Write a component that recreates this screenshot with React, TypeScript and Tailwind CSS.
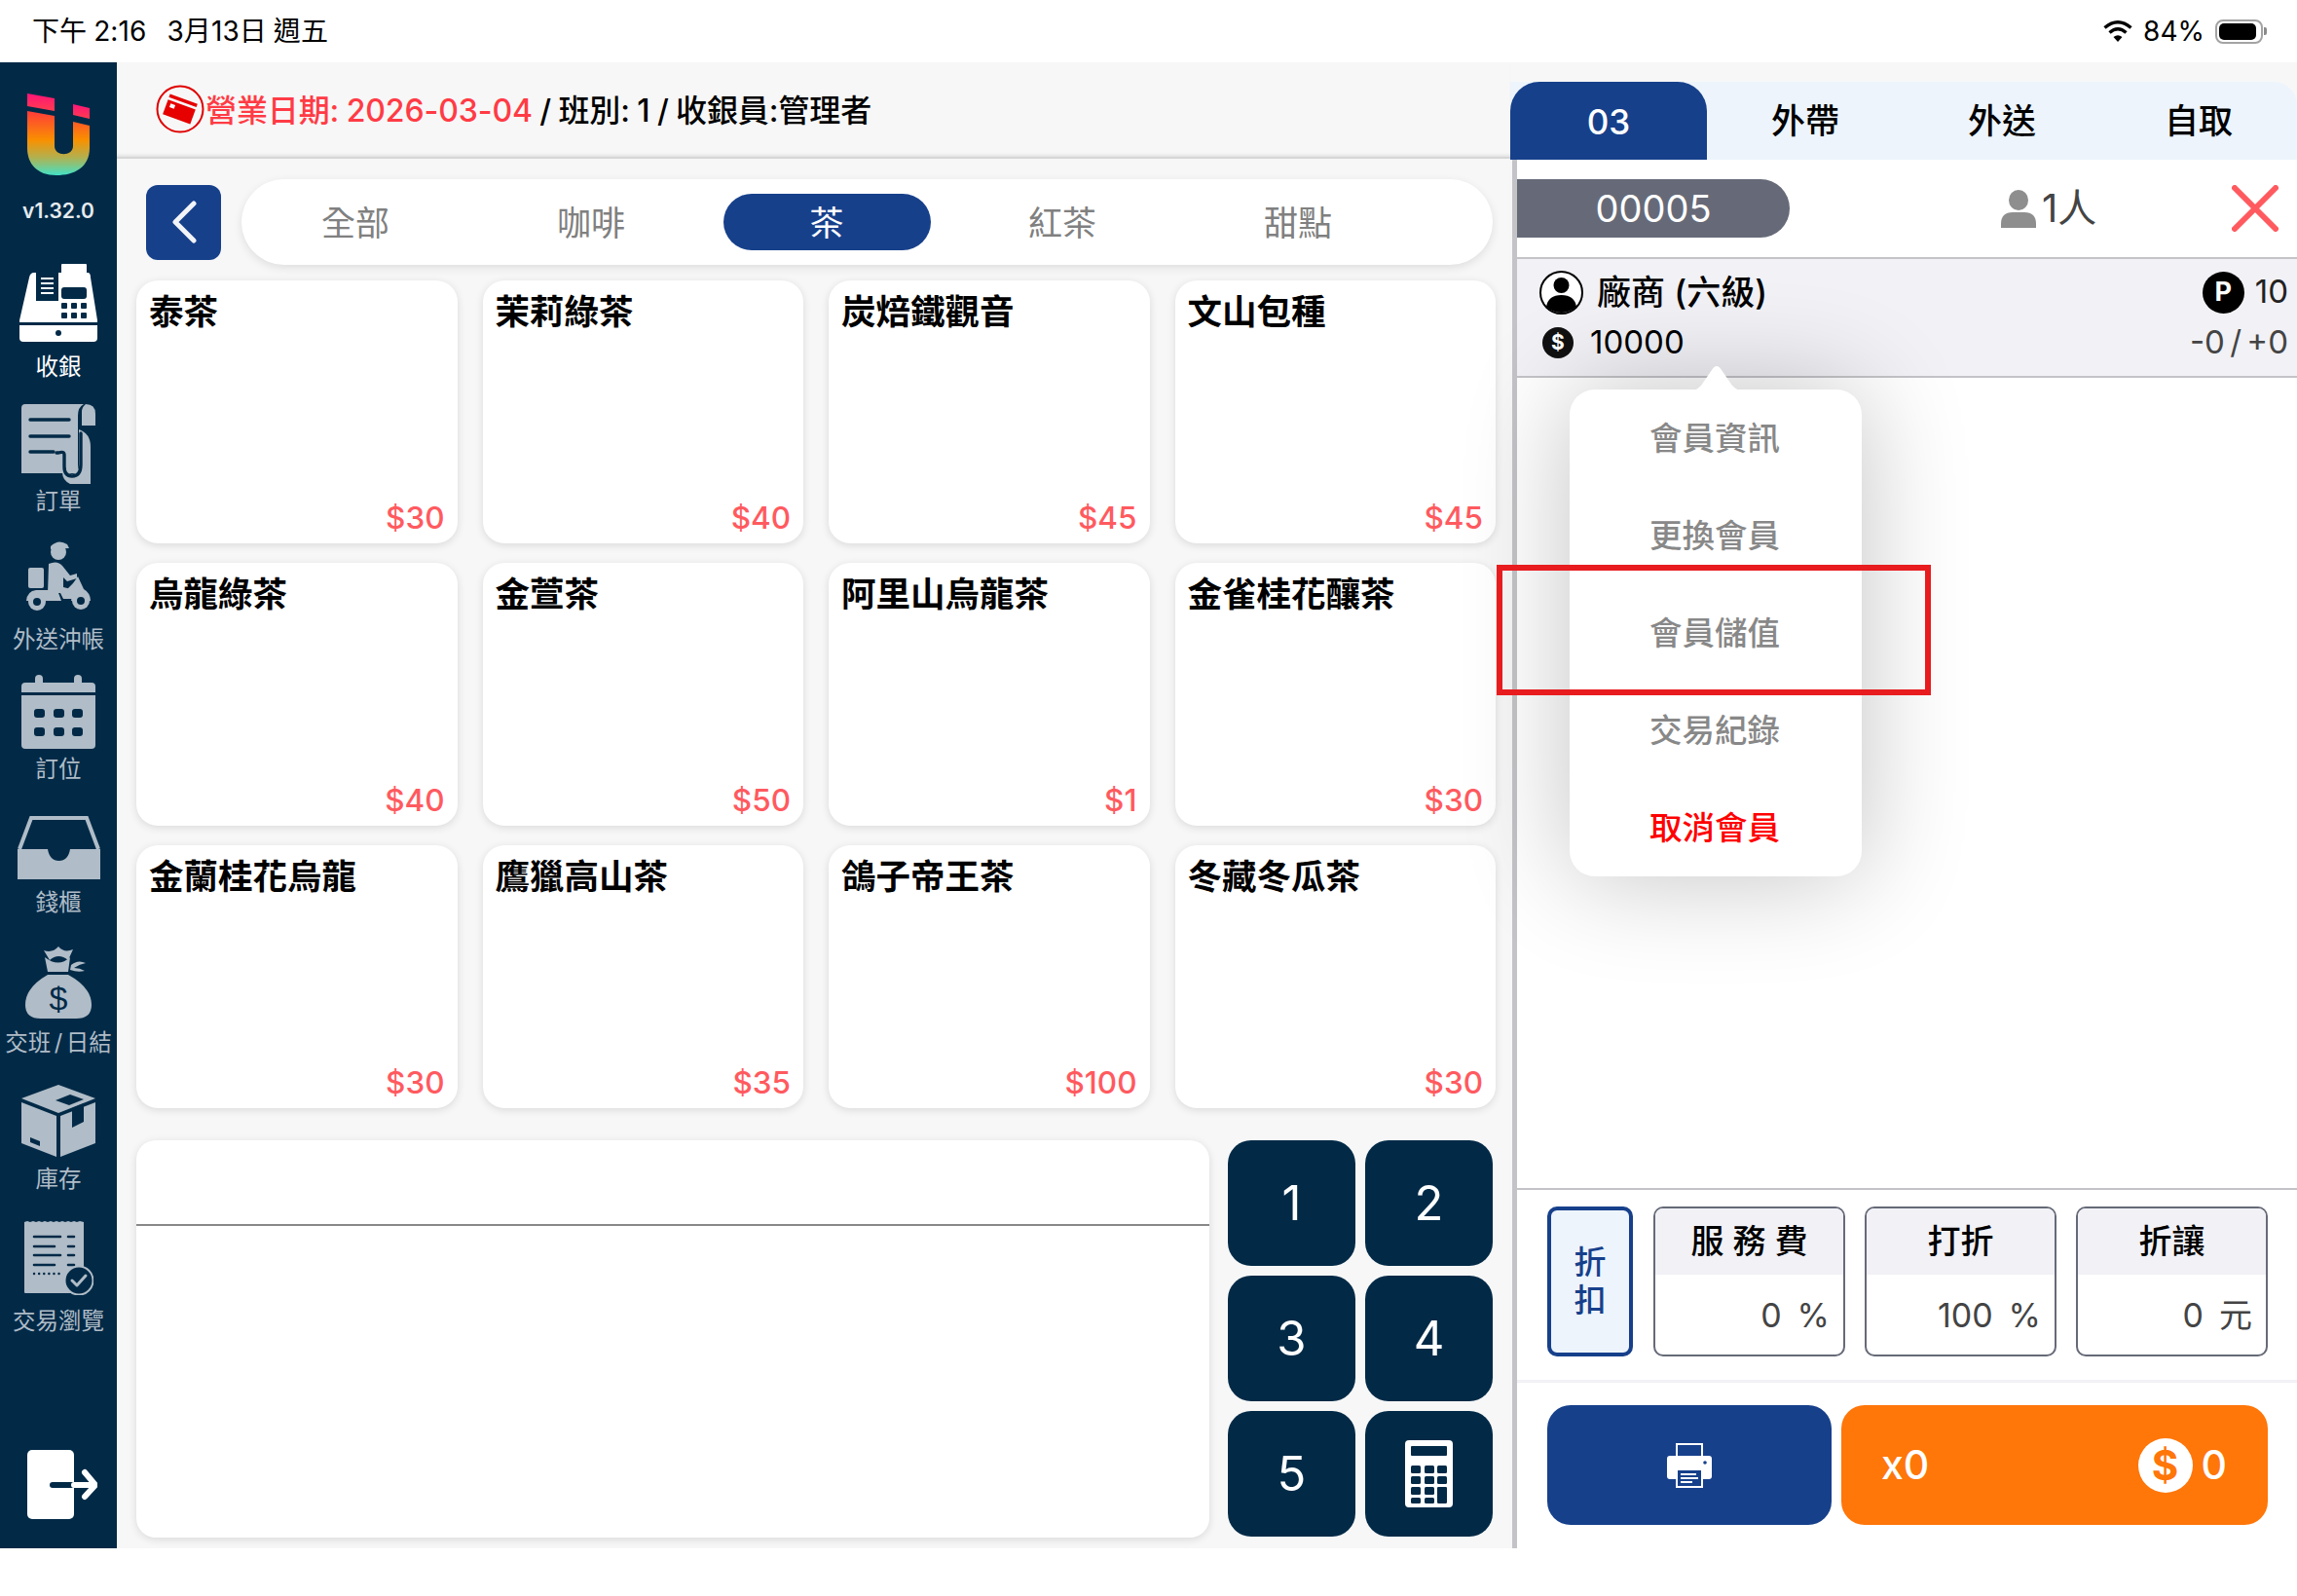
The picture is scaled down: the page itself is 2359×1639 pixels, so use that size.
import type { ReactNode } from "react";

const NAVY = "#022a47";
const LIGHT = "#b0bcc7";

function Logo() {
  return (
    <svg width="64" height="84" viewBox="0 0 64 84">
      <defs>
        <linearGradient id="u" x1="0" y1="0" x2="0" y2="1">
          <stop offset="0" stopColor="#ff3a3a" />
          <stop offset="0.45" stopColor="#f99000" />
          <stop offset="0.72" stopColor="#b3b04e" />
          <stop offset="1" stopColor="#43e2c6" />
        </linearGradient>
        <linearGradient id="p" x1="0" y1="0" x2="0" y2="1">
          <stop offset="0" stopColor="#ff1478" />
          <stop offset="1" stopColor="#ff3d4e" />
        </linearGradient>
      </defs>
      <path d="M0 0L28 5V18L0 13Z" fill="url(#p)" />
      <path d="M47 11L64 15V26L47 22Z" fill="url(#p)" />
      <path d="M0 18L28 23V54C28 65 47 65 47 54V29L64 33V56C64 76 48 84 30 84C10 84 0 72 0 56Z" fill="url(#u)" />
    </svg>
  );
}

function RegisterIcon() {
  return (
    <svg width="80" height="80" viewBox="0 0 80 80" fill="#fff">
      <rect x="43" y="0" width="26" height="16" rx="1" />
      <path d="M15 9H70Q73 9 73 14L80 58V60H0V58L10 14Q11 9 15 9Z" />
      <rect x="17" y="8" width="23" height="30" fill={NAVY} />
      <path d="M22 15H35M22 20H35M22 25H35M22 30H35" stroke="#fff" strokeWidth="2.200" />
      <rect x="43" y="24" width="26" height="12" rx="3" fill={NAVY} />
      <rect x="43" y="40" width="6" height="6" rx="1" fill={NAVY} />
      <rect x="53" y="40" width="6" height="6" rx="1" fill={NAVY} />
      <rect x="63" y="40" width="6" height="6" rx="1" fill={NAVY} />
      <rect x="43" y="50" width="6" height="6" rx="1" fill={NAVY} />
      <rect x="53" y="50" width="6" height="6" rx="1" fill={NAVY} />
      <rect x="63" y="50" width="6" height="6" rx="1" fill={NAVY} />
      <path d="M0 63H80V76Q80 80 76 80H4Q0 80 0 76Z" />
      <circle cx="40" cy="71" r="3" fill={NAVY} />
    </svg>
  );
}

function OrderIcon() {
  return (
    <svg width="76" height="82" viewBox="0 0 76 82" fill={LIGHT}>
      <path d="M4 0H64Q58 3 58 12V71H0V4Q0 0 4 0Z" />
      <path d="M66 0Q76 0 76 10V22H62V8Q62 3 66 0Z" />
      <path d="M42 58H46V64Q46 72 52 72Q59 72 59 62V26Q71 30 71 44V82H50Q42 78 42 70Z" />
      <path d="M9 16H49M9 33H49M9 49H33" stroke={NAVY} strokeWidth="3.400" strokeLinecap="round" />
      <path d="M44 52Q44 48 38 50H36M44 52V64Q44 74 52 74Q61 74 61 62V30" fill="none" stroke={NAVY} strokeWidth="3.400" strokeLinecap="round" />
    </svg>
  );
}

function ScooterIcon() {
  return (
    <svg width="66" height="72" viewBox="0 0 66 72" fill={LIGHT}>
      <circle cx="33" cy="12" r="8" />
      <path d="M25 6Q33 -2 42 4L44 8L25 9Z" />
      <rect x="2" y="28" width="16" height="21" rx="2" />
      <path d="M23 24Q32 20 37 26L45 36L52 34V39L42 42L38 38V48L46 50L48 60H38L35 54H22Z" />
      <path d="M53 37L59 50Q66 54 66 62H46L47 56L42 50L48 44Z" />
      <path d="M0 62Q1 52 10 51H32L36 62Z" />
      <circle cx="11" cy="63" r="9" />
      <circle cx="11" cy="63" r="4" fill={NAVY} />
      <circle cx="56" cy="62" r="9" />
      <circle cx="56" cy="62" r="4" fill={NAVY} />
    </svg>
  );
}

function CalendarIcon() {
  return (
    <svg width="76" height="76" viewBox="0 0 76 76" fill={LIGHT}>
      <rect x="0" y="8" width="76" height="68" rx="4" />
      <rect x="14" y="0" width="8" height="14" rx="4" />
      <rect x="54" y="0" width="8" height="14" rx="4" />
      <rect x="0" y="18" width="76" height="3" fill={NAVY} />
      {[13, 33, 52].map((x) => (
        <g key={x} fill={NAVY}>
          <rect x={x} y="35" width="11" height="9" rx="3" />
          <rect x={x} y="54" width="11" height="9" rx="3" />
        </g>
      ))}
    </svg>
  );
}

function DrawerIcon() {
  return (
    <svg width="85" height="66" viewBox="0 0 85 66" fill={LIGHT}>
      <path d="M2 34L14 2H71L83 34" fill="none" stroke={LIGHT} strokeWidth="4" />
      <path d="M0 34H31Q33 46 42.500 46Q52 46 54 34H85V65H0Z" />
    </svg>
  );
}

function BagIcon() {
  return (
    <svg width="68" height="74" viewBox="0 0 68 74" fill={LIGHT}>
      <path d="M19 4Q28 7 34 0Q40 7 49 3L44 14Q34 6 25 14Z" />
      <path d="M20 11Q34 22 46 11L44 26H23Z" />
      <path d="M47 19Q54 13 62 17Q56 18 50 22Q56 22 61 25Q54 27 46 24Z" />
      <path d="M23 29H44Q68 42 68 60Q68 74 52 74H16Q0 74 0 60Q0 42 23 29Z" />
      <text x="34" y="65" textAnchor="middle" fontSize="34" fill={NAVY} fontFamily="'Liberation Sans',sans-serif">$</text>
    </svg>
  );
}

function BoxIcon() {
  return (
    <svg width="76" height="74" viewBox="0 0 76 74" fill={LIGHT}>
      <path d="M38 0L76 14L38 29L0 14Z" />
      <path d="M0 18L36 32V74L0 60Z" />
      <path d="M40 32L76 18V60L40 74Z" />
      <path d="M35 16L50 10L64 15L49 21Z" fill={NAVY} />
      <path d="M52 24L64 19V38L52 44Z" fill={NAVY} />
      <path d="M9 54L19 58V63L9 59Z" fill={NAVY} />
    </svg>
  );
}

function ReceiptIcon() {
  return (
    <svg width="71" height="76" viewBox="0 0 71 76" fill={LIGHT}>
      <path d="M0 1L3 0L6 1L9 0L12 1L15 0L18 1L21 0L24 1L27 0L30 1L33 0L36 1L39 0L42 1L45 0L48 1L51 0L54 1L57 0L61 1V73Q61 74 60 74H1Q0 74 0 73Z" />
      <path d="M10 16H37M45 16H51M10 26H31M45 26H51M10 35H37M45 35H51M10 45H31M45 45H51" stroke={NAVY} strokeWidth="2.600" strokeLinecap="round" />
      <path d="M10 54H37" stroke={NAVY} strokeWidth="2.400" strokeLinecap="round" strokeDasharray="0.100 5" />
      <circle cx="56" cy="61" r="14.500" fill={NAVY} stroke={LIGHT} strokeWidth="2" />
      <path d="M49 61L54 66L63 56" fill="none" stroke={LIGHT} strokeWidth="3" strokeLinecap="round" strokeLinejoin="round" />
    </svg>
  );
}

function LogoutIcon() {
  return (
    <svg width="72" height="71" viewBox="0 0 72 71">
      <rect x="0" y="0" width="48" height="71" rx="5" fill="#fff" />
      <path d="M26 36H48" stroke={NAVY} strokeWidth="6" strokeLinecap="round" />
      <path d="M48 36H69M59 23L70 36L59 48" fill="none" stroke="#fff" strokeWidth="6" strokeLinecap="round" strokeLinejoin="round" />
    </svg>
  );
}

const navItems: { label: string; icon: ReactNode; box: string; gap: string; text: string }[] = [
  { label: "收銀", icon: <RegisterIcon />, box: "h-[144px]", gap: "mt-[11px]", text: "text-white" },
  { label: "訂單", icon: <OrderIcon />, box: "h-[140px]", gap: "mt-[3px]", text: "text-[#b0bcc7]" },
  { label: "外送沖帳", icon: <ScooterIcon />, box: "h-[138px]", gap: "mt-[15px]", text: "text-[#b0bcc7]" },
  { label: "訂位", icon: <CalendarIcon />, box: "h-[145px]", gap: "mt-[6px]", text: "text-[#b0bcc7]" },
  { label: "錢櫃", icon: <DrawerIcon />, box: "h-[134px]", gap: "mt-[8px]", text: "text-[#b0bcc7]" },
  { label: "交班 / 日結", icon: <BagIcon />, box: "h-[142px]", gap: "mt-[10px]", text: "text-[#b0bcc7]" },
  { label: "庫存", icon: <BoxIcon />, box: "h-[140px]", gap: "mt-[8px]", text: "text-[#b0bcc7]" },
  { label: "交易瀏覽", icon: <ReceiptIcon />, box: "h-[136px]", gap: "mt-[12px]", text: "text-[#b0bcc7]" },
];

function Sidebar() {
  return (
    <aside className="flex w-[120px] shrink-0 flex-col items-center bg-[#022a47]">
      <div className="mt-[32px]">
        <Logo />
      </div>
      <div className="mt-[24px] h-[26px] text-[21px] leading-[26px] font-semibold text-[#e6ebef]">
        v1.32.0
      </div>
      <div className="mt-[41px] flex flex-col items-center">
        {navItems.map((item) => (
          <div key={item.label} className={`flex flex-col items-center ${item.box}`}>
            {item.icon}
            <span className={`text-[23.500px] leading-[30px] whitespace-nowrap [word-spacing:-3px] ${item.gap} ${item.text}`}>
              {item.label}
            </span>
          </div>
        ))}
      </div>
      <div className="mt-auto mb-[30px] ml-[8px]">
        <LogoutIcon />
      </div>
    </aside>
  );
}

const categories = ["全部", "咖啡", "茶", "紅茶", "甜點"];

const products = [
  ["泰茶", "$30"],
  ["茉莉綠茶", "$40"],
  ["炭焙鐵觀音", "$45"],
  ["文山包種", "$45"],
  ["烏龍綠茶", "$40"],
  ["金萱茶", "$50"],
  ["阿里山烏龍茶", "$1"],
  ["金雀桂花釀茶", "$30"],
  ["金蘭桂花烏龍", "$30"],
  ["鷹獵高山茶", "$35"],
  ["鴿子帝王茶", "$100"],
  ["冬藏冬瓜茶", "$30"],
];

function Center() {
  return (
    <section className="flex w-[1431px] shrink-0 flex-col bg-[#f7f7f7]">
      <header className="flex h-[99px] shrink-0 items-center border-b-2 border-[#d6d6d6] pb-[2px] pl-[40px] shadow-[inset_0_-4px_4px_-3px_rgba(0,0,0,0.12)]">
        <svg width="50" height="50" viewBox="0 0 50 50" className="shrink-0">
          <circle cx="25" cy="25" r="23.500" fill="#f7f7f7" stroke="#e00000" strokeWidth="2" />
          <g transform="rotate(20 25 25)" fill="#e60000">
            <rect x="10" y="14" width="30" height="3.500" />
            <path d="M10 20H40V36H10Z" />
            <rect x="14" y="23" width="5" height="4" fill="#fff" />
          </g>
        </svg>
        <p className="mt-[4px] ml-[1px] text-[32px] font-medium tracking-[-0.1px] whitespace-nowrap text-black [word-spacing:-1px]">
          <span className="text-[#ff3b45]">營業日期: 2026-03-04</span> / 班別: 1 / 收銀員:管理者
        </p>
      </header>

      <div className="mt-[21px] flex h-[88px] shrink-0 items-center pl-[30px]">
        <button className="flex h-[77px] w-[77px] items-center justify-center rounded-[12px] bg-[#17408b]">
          <svg width="26" height="44" viewBox="0 0 26 44" fill="none">
            <path d="M23 3L4 22L23 41" stroke="#f2f4f8" strokeWidth="5" strokeLinecap="round" strokeLinejoin="round" />
          </svg>
        </button>
        <div className="ml-[21px] flex h-[88px] w-[1285px] items-center rounded-[44px] bg-white shadow-[0_3px_10px_rgba(0,0,0,0.1)]">
          <div className="-ml-[4px] flex">
            {categories.map((name) => (
              <div key={name} className="flex w-[242px] justify-center">
                <span
                  className={
                    name === "茶"
                      ? "flex h-[58px] w-[213px] items-center justify-center rounded-[29px] bg-[#17408b] pt-[2px] text-[35px] text-white"
                      : "flex h-[58px] items-center pt-[2px] text-[35px] text-[#808080]"
                  }
                >
                  {name}
                </span>
              </div>
            ))}
          </div>
        </div>
      </div>

      <div className="mt-[16px] ml-[20px] grid w-[1396px] shrink-0 grid-cols-4 gap-x-[26px] gap-y-[20px]">
        {products.map(([name, price]) => (
          <div
            key={name}
            className="flex h-[270px] flex-col justify-between rounded-[22px] bg-white pt-[12px] pr-[13px] pb-[8px] pl-[13px] shadow-[0_2px_8px_rgba(0,0,0,0.12)]"
          >
            <div className="text-[35.500px] leading-[42px] font-bold whitespace-nowrap text-black">{name}</div>
            <div className="text-right text-[31.500px] leading-[36px] font-medium text-[#ff5a5f]">{price}</div>
          </div>
        ))}
      </div>

      <div className="mt-[33px] ml-[20px] flex shrink-0 gap-[19px]">
        <div className="h-[408px] w-[1102px] rounded-[20px] bg-white shadow-[0_2px_8px_rgba(0,0,0,0.12)]">
          <div className="h-[88px] border-b-2 border-[#888888]" />
        </div>
        <div className="grid grid-cols-[131px_131px] grid-rows-[129px_129px_129px] gap-x-[10px] gap-y-[10px]">
          {["1", "2", "3", "4", "5"].map((n) => (
            <button
              key={n}
              className="flex items-center justify-center rounded-[24px] bg-[#022a47] text-[49px] text-white"
            >
              {n}
            </button>
          ))}
          <button className="flex items-center justify-center rounded-[24px] bg-[#022a47]">
            <svg width="49" height="69" viewBox="0 0 49 69">
              <rect width="49" height="69" rx="4" fill="#fff" />
              <rect x="6" y="6" width="37" height="10" rx="1" fill={NAVY} />
              {[26, 37, 48].map((y) =>
                [6, 20, 33].map((x) => <rect key={`${x}-${y}`} x={x} y={y} width="10" height="8" rx="1.500" fill={NAVY} />)
              )}
              <rect x="6" y="59" width="10" height="6" rx="1.500" fill={NAVY} />
              <rect x="20" y="59" width="10" height="6" rx="1.500" fill={NAVY} />
              <rect x="33" y="48" width="10" height="17" rx="1.500" fill={NAVY} />
            </svg>
          </button>
        </div>
      </div>
    </section>
  );
}

const adjustments = [
  { title: "服 務 費", value: "0", unit: "%" },
  { title: "打折", value: "100", unit: "%" },
  { title: "折讓", value: "0", unit: "元" },
];

const memberActions = ["會員資訊", "更換會員", "會員儲值", "交易紀錄", "取消會員"];

function MemberMenu() {
  return (
    <div className="absolute top-[336px] left-[61px] w-[300px] rounded-[26px] bg-white shadow-[0_0_110px_rgba(0,0,0,0.24)]">
      <svg width="60" height="28" viewBox="0 0 60 28" className="absolute -top-[26px] left-[121px]" fill="#fff">
        <path d="M0 28Q8 28 14 22L25 6Q30 -2 35 6L46 22Q52 28 60 28Z" />
      </svg>
      {memberActions.map((label) => (
        <div
          key={label}
          className={`-ml-[2px] flex h-[100px] items-center justify-center text-[33.500px] font-medium ${
            label === "取消會員" ? "text-[#ff0000]" : "text-[#888888]"
          }`}
        >
          {label}
        </div>
      ))}
    </div>
  );
}

function RightPanel() {
  return (
    <section className="relative flex flex-1 flex-col bg-[#f7f7f7] pt-[20px]">
      <div className="grid h-[80px] shrink-0 grid-cols-4 rounded-tr-[24px] bg-[#edf4fc] text-[35px] text-black">
        <div className="flex items-center justify-center rounded-t-[30px] bg-[#17408b] pt-[2px] font-medium text-white">03</div>
        <div className="flex items-center justify-center font-medium">外帶</div>
        <div className="flex items-center justify-center font-medium">外送</div>
        <div className="flex items-center justify-center font-medium">自取</div>
      </div>

      <div className="ml-[2px] flex flex-1 flex-col border-l-[5px] border-[#c4c4c8] bg-white">
        <div className="flex h-[100px] shrink-0 items-center">
          <div className="flex h-[60px] w-[280px] items-center justify-center rounded-r-[30px] bg-[#666a78] text-[38px] text-white">
            00005
          </div>
          <svg width="36" height="39" viewBox="0 0 36 39" className="ml-[217px]" fill="#8e8e8e">
            <ellipse cx="18" cy="10.500" rx="10" ry="10.500" />
            <path d="M0 39V35Q0 23 12 23H24Q36 23 36 35V39Z" />
          </svg>
          <span className="ml-[6px] text-[40px] text-[#444444]">1人</span>
          <svg width="48" height="48" viewBox="0 0 48 48" className="mr-[19px] ml-auto" fill="none">
            <path d="M3 3L45 45M45 3L3 45" stroke="#ff5a5f" strokeWidth="6" strokeLinecap="round" />
          </svg>
        </div>

        <div className="flex h-[124px] shrink-0 flex-col justify-center border-y-2 border-[#c4c4c8] bg-[#f1f1f6] pr-[9px] pl-[23px]">
          <div className="flex h-[46px] items-center justify-between">
            <div className="flex items-center">
              <svg width="45" height="45" viewBox="0 0 45 45">
                <circle cx="22.500" cy="22.500" r="21.500" fill="#fff" stroke="#000" strokeWidth="2" />
                <circle cx="22.500" cy="15" r="8" />
                <path d="M7 37Q9 25 22.500 25Q36 25 38 37Q31 43 22.500 43Q14 43 7 37Z" />
              </svg>
              <span className="ml-[14px] text-[35px] font-medium text-black">廠商 (六級)</span>
            </div>
            <div className="flex items-center">
              <span className="flex h-[43px] w-[43px] items-center justify-center rounded-full bg-black text-[27px] font-bold text-white">P</span>
              <span className="ml-[11px] text-[33px] text-[#222222]">10</span>
            </div>
          </div>
          <div className="mt-[6px] flex h-[46px] items-center justify-between">
            <div className="flex items-center pl-[3px]">
              <span className="flex h-[32px] w-[32px] items-center justify-center rounded-full bg-[#111111] text-[21px] font-bold text-white">$</span>
              <span className="ml-[17px] text-[33px] text-black">10000</span>
            </div>
            <span className="text-[33px] text-[#444444] [word-spacing:-4px]">-0 / +0</span>
          </div>
        </div>

        <div className="flex-1" />

        <div className="flex h-[197px] shrink-0 gap-[20px] border-t-2 border-[#c4c4c8] pt-[17px] pl-[31px]">
          <div className="mr-[1px] flex h-[154px] w-[88px] flex-col items-center justify-center rounded-[10px] border-[4px] border-[#17408b] bg-[#edf4fc] text-[33px] leading-[39px] font-medium text-[#17408b]">
            <span>折</span>
            <span>扣</span>
          </div>
          {adjustments.map((item) => (
            <div key={item.title} className="h-[154px] w-[197px] overflow-hidden rounded-[10px] border-2 border-[#666a78]">
              <div className="flex h-[68px] items-center justify-center bg-[#f1f1f6] pb-[2px] text-[34px] font-medium text-black">
                {item.title}
              </div>
              <div className="flex h-[82px] items-center justify-end gap-[16px] pr-[14px] text-[34px] text-[#444444]">
                <span>{item.value}</span>
                <span>{item.unit}</span>
              </div>
            </div>
          ))}
        </div>

        <div className="flex h-[173px] shrink-0 gap-[10px] border-t-[3px] border-[#f1f1f6] pt-[23px] pl-[31px]">
          <button className="flex h-[123px] w-[292px] items-center justify-center rounded-[24px] bg-[#17408b]">
            <svg width="46" height="46" viewBox="0 0 46 46" fill="#fff">
              <rect x="10" y="1" width="26" height="14" fill="none" stroke="#fff" strokeWidth="2" />
              <path d="M3 13H43Q46 13 46 16V34Q46 37 43 37H3Q0 37 0 34V16Q0 13 3 13Z" />
              <circle cx="39" cy="20" r="1.800" fill="#17408b" />
              <rect x="10" y="27" width="26" height="18" fill="#17408b" stroke="#fff" strokeWidth="2" />
              <path d="M14 32H30M14 36H32M14 40H26" stroke="#fff" strokeWidth="2" />
            </svg>
          </button>
          <button className="flex h-[123px] w-[438px] items-center rounded-[24px] bg-[#ff7609] pr-[42px] pl-[41px] text-[41px] font-medium text-white">
            <span>x0</span>
            <span className="ml-auto flex h-[56px] w-[56px] items-center justify-center rounded-full bg-white text-[42px] font-bold text-[#ff7609]">$</span>
            <span className="ml-[9px]">0</span>
          </button>
        </div>
      </div>

      <MemberMenu />
      <div className="absolute top-[516px] left-[-14px] h-[134px] w-[446px] border-[6px] border-[#e81c1f]" />
    </section>
  );
}

export default function App() {
  return (
    <div className="flex h-[1639px] w-[2359px] flex-col overflow-hidden bg-white font-[Inter,'Noto_Sans_CJK_TC',sans-serif]">
      <div className="flex h-[64px] shrink-0 items-center justify-between bg-white pr-[31px] pl-[33px] text-[28px] text-black">
        <span className="whitespace-pre tracking-[0.1px] [word-spacing:-1px]">下午 2:16   3月13日 週五</span>
        <div className="flex items-center">
          <svg width="30" height="24" viewBox="0 0 30 24" fill="none" stroke="#000" strokeWidth="3.400">
            <path d="M1.500 8.500Q15 -3 28.500 8.500" />
            <path d="M6.500 13.500Q15 6 23.500 13.500" />
            <path d="M15 23L10.500 18Q15 14.500 19.500 18Z" fill="#000" stroke="none" />
          </svg>
          <span className="ml-[11px]">84%</span>
          <div className="ml-[11px] flex h-[25px] w-[49px] items-center rounded-[8px] border-2 border-[#a3a3a3] p-[2px]">
            <div className="h-full w-[38px] rounded-[5px] bg-black" />
          </div>
          <div className="ml-[1px] h-[8px] w-[3px] rounded-r-[2px] bg-[#8a8a8a]" />
        </div>
      </div>
      <div className="flex h-[1526px] shrink-0">
        <Sidebar />
        <Center />
        <RightPanel />
      </div>
    </div>
  );
}
